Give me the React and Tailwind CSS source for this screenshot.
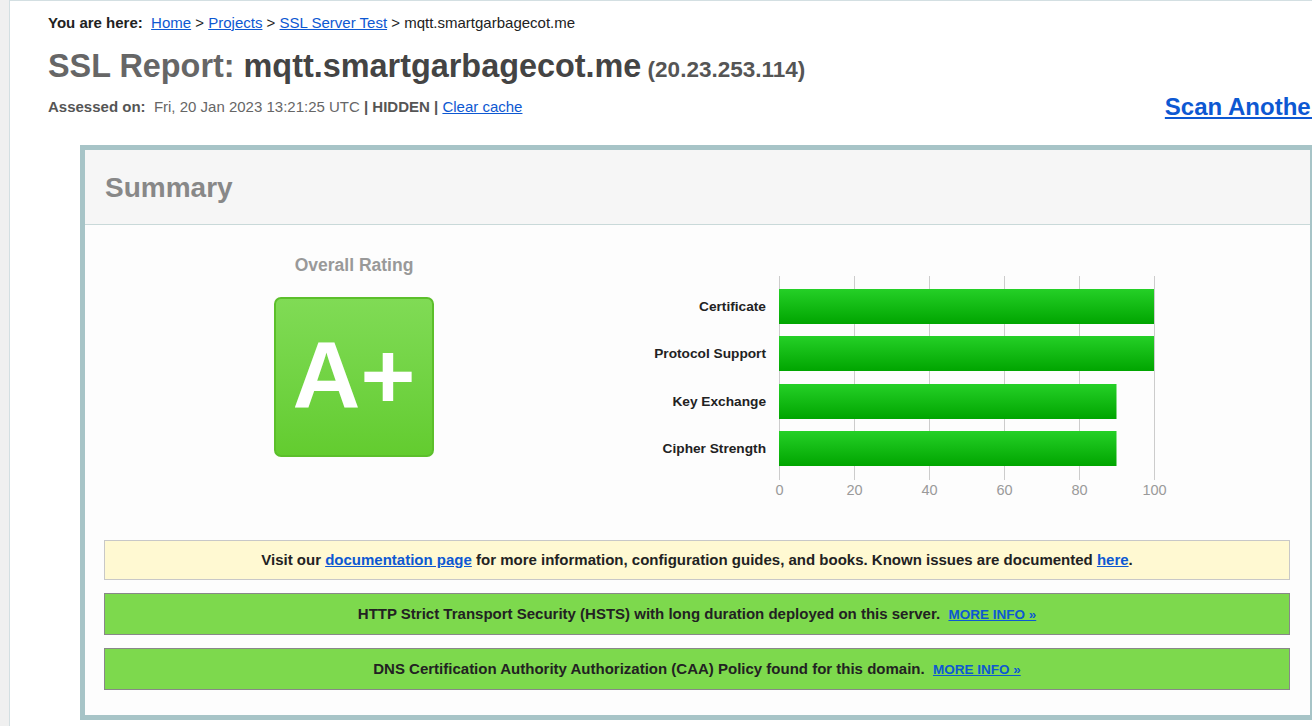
const bars = [
  { label: 'Certificate', value: 100, y: 13 },
  { label: 'Protocol Support', value: 100, y: 60 },
  { label: 'Key Exchange', value: 90, y: 108 },
  { label: 'Cipher Strength', value: 90, y: 155 },
]

const ticks = [0, 20, 40, 60, 80, 100]

function RatingChart() {
  return (
    <svg width="420" height="230" className="block">
      <defs>
        <linearGradient id="barFill" x1="0" y1="0" x2="0" y2="1">
          <stop offset="0" stopColor="#25d027" />
          <stop offset="1" stopColor="#00a500" />
        </linearGradient>
      </defs>
      {ticks.map((t, i) => (
        <line key={t} x1={10.5 + i * 75} x2={10.5 + i * 75} y1="0" y2="204" stroke="#cccccc" strokeWidth="1" />
      ))}
      {bars.map(b => (
        <rect key={b.label} x="10" y={b.y} width={b.value * 3.75} height="35" fill="url(#barFill)" />
      ))}
      {ticks.map((t, i) => (
        <text key={t} x={10.5 + i * 75} y="219" textAnchor="middle" fontSize="14.5" fill="#9a9a9a" fontFamily="'Liberation Sans', Arial, sans-serif">
          {t}
        </text>
      ))}
    </svg>
  )
}

export default function App() {
  const link = 'text-[#0d58d2] underline'
  return (
    <div className="w-[1312px] h-[726px] overflow-hidden flex bg-white font-['Liberation_Sans',Arial,sans-serif]">
      <div className="w-[10px] shrink-0 bg-[#f0f0f0] border-r border-[#d3dfe2]" />
      <div className="flex-1 min-w-0 border-t border-[#d3dfe2] pl-[38px]">

        {/* Breadcrumb */}
        <div className="mt-[13px] text-[15px] leading-[18px] text-[#222] whitespace-nowrap">
          <span className="font-bold">You are here:</span>&nbsp;&nbsp;
          <a className={link}>Home</a> &gt; <a className={link}>Projects</a> &gt; <a className={link}>SSL Server Test</a> &gt; mqtt.smartgarbagecot.me
        </div>

        {/* Title */}
        <h1 className="mt-[16px] text-[32.4px] leading-[37px] font-bold whitespace-nowrap">
          <span className="text-[#666]">SSL Report: </span>
          <span className="text-[#444]">mqtt.smartgarbagecot.me</span>
          <span className="text-[22.5px] text-[#555]"> (20.23.253.114)</span>
        </h1>

        {/* Assessed row */}
        <div className="w-[1292px] h-[24px] flex items-end justify-between mt-[7px] whitespace-nowrap">
          <div className="text-[15px] leading-[18px] text-[#666] mb-[3px]">
            <span className="font-bold text-[#555]">Assessed on:</span>&nbsp;&nbsp;Fri, 20 Jan 2023 13:21:25 UTC <span className="font-bold text-[#555]">| HIDDEN |</span> <a className={link}>Clear cache</a>
          </div>
          <a className="text-[24px] leading-[30px] font-bold text-[#0d58d2] underline -mb-[3px]">Scan Another &raquo;</a>
        </div>

        {/* Summary box */}
        <div className="ml-[32px] mt-[26px] w-[1235px] border-[5px] border-[#a7c4c7]">
          <div className="h-[75px] bg-[#f6f6f6] border-b border-[#c9d9d9] flex items-center pl-[20px] pt-[2px]">
            <h2 className="text-[28px] font-bold text-[#888]">Summary</h2>
          </div>

          <div className="bg-[#fdfdfd] pb-[25px]">
            <div className="flex">
              <div className="w-[519px] pl-[19px] pt-[30px] flex flex-col items-center">
                <div className="h-[20px] leading-[20px] text-[17.5px] font-bold text-[#999]">Overall Rating</div>
                <div className="mt-[22px] w-[160px] h-[160px] rounded-[7px] border-2 border-[#5cbf2b] bg-gradient-to-b from-[#80db55] to-[#63cc2f] flex items-center justify-center">
                  <span className="text-[94px] leading-none font-bold text-white -mt-[2px]">A+</span>
                </div>
              </div>

              <div className="pt-[51px] flex">
                <div className="w-[162px] flex flex-col items-end text-[13.7px] font-bold text-[#222]">
                  {bars.map((b, i) => (
                    <div key={b.label} className={`h-[35px] flex items-center pt-[2px] ${i % 2 === 0 ? 'mt-[13px]' : 'mt-[12px]'}`}>
                      {b.label}
                    </div>
                  ))}
                </div>
                <div className="ml-[3px]">
                  <RatingChart />
                </div>
              </div>
            </div>

            <div className="mt-[34px] pl-[19px] pr-[20px] flex flex-col gap-[13px] text-[15px] font-bold text-[#222]">
              <div className="h-[40px] border border-[#c8c8c8] bg-[#fff9d2] flex items-center justify-center">
                <span>Visit our <a className={link}>documentation page</a> for more information, configuration guides, and books. Known issues are documented <a className={link}>here</a>.</span>
              </div>
              <div className="h-[42px] border border-[#888] bg-[#7dd94d] flex items-center justify-center">
                <span>HTTP Strict Transport Security (HSTS) with long duration deployed on this server.&nbsp;&nbsp;<a className="text-[13.5px] text-[#0d58d2] underline">MORE INFO &raquo;</a></span>
              </div>
              <div className="h-[42px] border border-[#888] bg-[#7dd94d] flex items-center justify-center">
                <span>DNS Certification Authority Authorization (CAA) Policy found for this domain.&nbsp;&nbsp;<a className="text-[13.5px] text-[#0d58d2] underline">MORE INFO &raquo;</a></span>
              </div>
            </div>
          </div>
        </div>
      </div>
    </div>
  )
}
